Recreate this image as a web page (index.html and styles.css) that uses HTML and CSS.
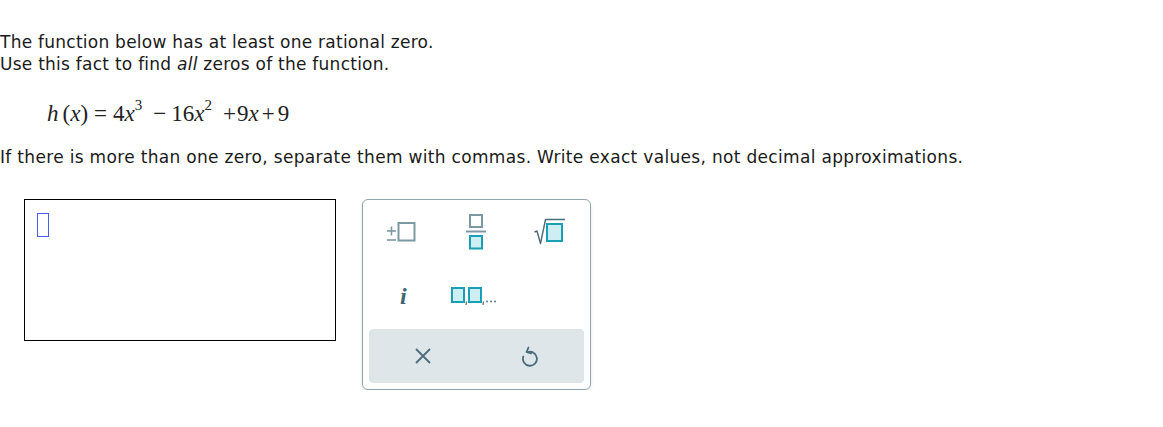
FILE: index.html
```html
<!DOCTYPE html>
<html>
<head>
<meta charset="utf-8">
<link rel="stylesheet" href="styles.css">
</head>
<body>
<div class="question">
  <p class="intro">The function below has at least one rational zero.<br>Use this fact to find <i>all</i> zeros of the function.</p>
  <div class="eq"><i>h</i><span class="sp1"></span>(<i>x</i>)<span class="op">=</span>4<i>x</i><sup>3</sup><span class="op2">−</span>16<i>x</i><sup>2</sup><span class="op3">+</span>9<i>x</i><span class="op4">+</span>9</div>
  <p class="note">If there is more than one zero, separate them with commas. Write exact values, not decimal approximations.</p>
  <div class="answer-row">
    <div class="answer-box"><span class="cursor"></span></div>
    <div class="keypad">
      <div class="keys">
        <div class="key key-pm">
          <svg width="30" height="20" viewBox="0 0 30 20">
            <g stroke="#7c99a3" stroke-width="1.6" fill="none">
              <line x1="1" y1="9" x2="10" y2="9"/>
              <line x1="5.5" y1="4.5" x2="5.5" y2="13.5"/>
              <line x1="1" y1="18" x2="10" y2="18"/>
              <rect x="12.5" y="1" width="16" height="17.5" stroke-width="2"/>
            </g>
          </svg>
        </div>
        <div class="key">
          <svg width="22" height="36" viewBox="0 0 22 36">
            <rect x="5" y="1" width="12" height="12" fill="#fff" stroke="#7c99a3" stroke-width="2"/>
            <line x1="1" y1="17.5" x2="21" y2="17.5" stroke="#7c99a3" stroke-width="2"/>
            <rect x="5" y="22" width="12" height="12.5" fill="#cdeef2" stroke="#1a9fb4" stroke-width="2"/>
          </svg>
        </div>
        <div class="key key-sqrt">
          <svg width="32" height="28" viewBox="0 0 32 28">
            <polyline points="0.5,14 3,13 6.5,25.5 11.5,1.5 31,1.5" fill="none" stroke="#4a6c7b" stroke-width="1.4" stroke-linejoin="round"/>
            <rect x="13" y="6" width="15" height="17" fill="#cdeef2" stroke="#1a9fb4" stroke-width="2"/>
          </svg>
        </div>
        <div class="key key-i"><span class="imag">i</span></div>
        <div class="key key-list">
          <svg width="48" height="20" viewBox="0 0 48 20">
            <rect x="1" y="1" width="12" height="14" fill="#cdeef2" stroke="#1a9fb4" stroke-width="2"/>
            <path d="M15.5 14.5 L15 18" stroke="#4a6c7b" stroke-width="1.2"/>
            <rect x="18" y="1" width="12" height="14" fill="#cdeef2" stroke="#1a9fb4" stroke-width="2"/>
            <path d="M32.5 14.5 L32 18" stroke="#4a6c7b" stroke-width="1.2"/>
            <circle cx="36" cy="14.5" r="0.9" fill="#4a6c7b"/>
            <circle cx="40" cy="14.5" r="0.9" fill="#4a6c7b"/>
            <circle cx="44" cy="14.5" r="0.9" fill="#4a6c7b"/>
          </svg>
        </div>
        <div class="key"></div>
      </div>
      <div class="actions">
        <div class="action">
          <svg width="16" height="16" viewBox="0 0 16 16">
            <path d="M1 1 L15 15 M15 1 L1 15" stroke="#4a6c7b" stroke-width="1.8" fill="none"/>
          </svg>
        </div>
        <div class="action">
          <svg width="18" height="21" viewBox="0 0 18 21">
            <path d="M6.5 6.2 A7 7 0 1 1 2.3 10.5" stroke="#4a6c7b" stroke-width="1.8" fill="none" stroke-linecap="round"/>
            <path d="M7.5 1.5 L5.5 6 L10 7.5" stroke="#4a6c7b" stroke-width="1.8" fill="none" stroke-linecap="round" stroke-linejoin="round"/>
          </svg>
        </div>
      </div>
    </div>
  </div>
</div>
</body>
</html>
```

FILE: styles.css
```css
html, body {
  margin: 0;
  padding: 0;
  background: #fff;
}
body {
  font-family: "DejaVu Sans", Verdana, sans-serif;
  color: #1a1a1a;
}
.question {
  padding-top: 31px;
}
.intro {
  margin: 0;
  font-size: 17px;
  letter-spacing: 0.25px;
  line-height: 22px;
}
.eq {
  font-family: "Liberation Serif", "Times New Roman", serif;
  font-size: 23px;
  line-height: 24px;
  padding-left: 47px;
  margin-top: 27px;
  color: #222;
}
.eq i {
  font-style: italic;
}
.eq sup {
  font-size: 15px;
  vertical-align: 11px;
  line-height: 0;
}
.sp1 { display: inline-block; width: 4px; }
.op { margin: 0 6px 0 6px; }
.op2 { margin: 0 5px 0 11px; }
.op3 { margin: 0 1px 0 11px; }
.op4 { margin: 0 3px; }
.note {
  margin: 21px 0 0;
  font-size: 17px;
  letter-spacing: 0.32px;
  line-height: 21px;
}
.answer-row {
  display: flex;
  align-items: flex-start;
  margin-top: 31px;
  padding-left: 24px;
}
.answer-box {
  width: 310px;
  height: 140px;
  border: 1px solid #000;
}
.cursor {
  display: block;
  margin: 13px 0 0 12px;
  width: 10px;
  height: 22px;
  border: 1.5px solid #4c5cf0;
}
.keypad {
  margin-left: 26px;
  width: 215px;
  border: 1px solid #8fa6b0;
  border-radius: 6px;
  box-shadow: 0 2px 3px rgba(0, 0, 0, 0.12);
  padding: 0 6px 6px;
  display: flex;
  flex-direction: column;
}
.keys {
  display: grid;
  grid-template-columns: repeat(3, 1fr);
  grid-template-rows: 64px 65px;
}
.key {
  display: flex;
  align-items: center;
  justify-content: center;
}
.key svg { display: block; }
.key-pm { padding-right: 8px; }
.key-sqrt { padding-left: 3px; }
.key-i { padding-right: 3px; }
.key-list { padding-right: 2px; }
.imag {
  font-family: "Liberation Serif", serif;
  font-style: italic;
  font-weight: bold;
  font-size: 24px;
  color: #3e6576;
}
.actions {
  height: 54px;
  background: #dfe6e9;
  border-radius: 4px;
  display: flex;
}
.action {
  flex: 1;
  display: flex;
  align-items: center;
  justify-content: center;
}
.action svg { display: block; }
```
